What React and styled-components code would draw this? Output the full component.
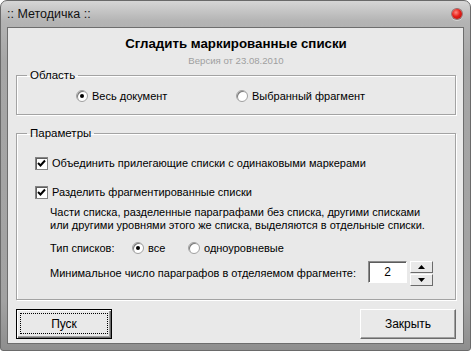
import React from 'react';
import styled, { createGlobalStyle } from 'styled-components';

const GlobalStyle = createGlobalStyle`
  html, body {
    margin: 0;
    padding: 0;
    background: #ffffff;
  }
  body {
    font-family: "Liberation Sans", Arial, sans-serif;
    font-size: 11px;
    color: #000;
  }
`;

const Window = styled.div`
  box-sizing: border-box;
  width: 471px;
  height: 351px;
  border: 1px solid #6a6a6a;
  border-radius: 7px 7px 3px 3px;
  background: linear-gradient(to bottom, #d6d6d6 0px, #b4b4b4 20px, #a6a6a6 60px, #a2a2a2 300px, #8e8e8e 100%);
  display: flex;
  flex-direction: column;
  overflow: hidden;
`;

const TitleBar = styled.div`
  height: 26px;
  display: flex;
  align-items: center;
  justify-content: space-between;
  padding: 0 8px 0 6px;
  font-size: 12.5px;
  color: #111;
`;

const CloseDot = styled.span`
  width: 10px;
  height: 10px;
  border-radius: 50%;
  margin-top: -1px;
  background: radial-gradient(circle at 40% 35%, #ff8a80 0, #e8201a 45%, #a30c08 100%);
  box-shadow: 0 0 0 1px rgba(90, 20, 20, 0.5), 0 1px 0 1px rgba(255, 255, 255, 0.4);
`;

const Client = styled.div`
  flex: 1;
  margin: 0 6px 6px 6px;
  border: 1px solid #6d6d6d;
  background: #e9e9e9;
  padding: 0 7px 0 8px;
  display: flex;
  flex-direction: column;
`;

const Heading = styled.div`
  margin-top: 8px;
  text-align: center;
  font-weight: bold;
  font-size: 13.3px;
  line-height: 16px;
`;

const Version = styled.div`
  margin-top: 3px;
  text-align: center;
  font-size: 9.6px;
  line-height: 12px;
  color: #9f9f9f;
`;

const Group = styled.fieldset`
  margin: ${(p) => p.$top}px 0 0 0;
  padding: 0;
  border: 1px solid #a3a3a3;
  box-shadow: inset 1px 1px 0 #fff, 1px 1px 0 #fff;
  min-width: 0;
`;

const Legend = styled.legend`
  margin-left: 10px;
  padding: 0 3px;
  line-height: 13px;
  font-size: 11.5px;
`;

const GroupBody = styled.div`
  padding: ${(p) => p.$pad};
  display: flex;
  flex-direction: column;
`;

const ScopeRow = styled.div`
  display: grid;
  grid-template-columns: 160px 1fr;
  height: 16px;
  align-items: center;
`;

const Option = styled.label`
  display: flex;
  align-items: center;
  gap: 4px;
  white-space: nowrap;
`;

const Radio = styled.span`
  box-sizing: border-box;
  width: 12px;
  height: 12px;
  border-radius: 50%;
  background: #fff;
  border: 1px solid #a0a0a0;
  box-shadow: inset 1px 1px 0 #7a7a7a;
  display: flex;
  align-items: center;
  justify-content: center;
  flex: none;

  &::after {
    content: '';
    width: 4px;
    height: 4px;
    border-radius: 50%;
    background: ${(p) => (p.$checked ? '#000' : 'transparent')};
  }
`;

const CheckRow = styled.div`
  display: flex;
  align-items: center;
  height: 14px;
  margin-top: ${(p) => p.$top}px;
`;

const Box = styled.span`
  box-sizing: border-box;
  width: 13px;
  height: 13px;
  background: #fff;
  border: 1px solid #848484;
  box-shadow: inset 1px 1px 0 #5f5f5f;
  display: flex;
  align-items: center;
  justify-content: center;
  margin-right: 4px;
  flex: none;
`;

const Sub = styled.div`
  margin-left: 15px;
  display: flex;
  flex-direction: column;
`;

const Note = styled.p`
  margin: 7px 0 0 0;
  line-height: 13px;
`;

const TypeRow = styled.div`
  margin-top: 8px;
  display: grid;
  grid-template-columns: 82px 56px auto;
  align-items: center;
  height: 16px;
`;

const MinRow = styled.div`
  margin-top: 5px;
  display: flex;
  align-items: center;
  justify-content: space-between;
  height: 24px;
`;

const Spin = styled.div`
  display: flex;
  gap: 3px;
  align-items: flex-start;
  align-self: flex-start;
`;

const SpinField = styled.div`
  box-sizing: border-box;
  width: 39px;
  height: 22px;
  background: #fff;
  border: 1px solid;
  border-color: #8c8c8c #fff #fff #8c8c8c;
  box-shadow: inset 1px 1px 0 #5c5c5c;
  display: flex;
  align-items: center;
  justify-content: center;
  font-size: 12px;
`;

const SpinButtons = styled.div`
  display: flex;
  flex-direction: column;
  gap: 1px;
`;

const SpinButton = styled.div`
  box-sizing: border-box;
  width: 23px;
  height: 12px;
  background: #e9e9e9;
  border: 1px solid;
  border-color: #fff #6b6b6b #6b6b6b #fff;
  display: flex;
  align-items: center;
  justify-content: center;
`;

const Footer = styled.div`
  margin-top: 9px;
  display: flex;
  justify-content: space-between;
`;

const Button = styled.button`
  box-sizing: border-box;
  width: 96px;
  height: 30px;
  padding: 0;
  font-family: inherit;
  font-size: 12px;
  color: #000;
  background: #e9e9e9;
  border: 1px solid;
  border-color: ${(p) => (p.$default ? '#000' : '#fff #6b6b6b #6b6b6b #fff')};
  box-shadow: ${(p) =>
    p.$default
      ? 'inset 1px 1px 0 #fff, inset -1px -1px 0 #6b6b6b, inset -2px -2px 0 #a0a0a0'
      : 'inset -1px -1px 0 #a0a0a0'};
  position: relative;

  &::after {
    content: '';
    display: ${(p) => (p.$default ? 'block' : 'none')};
    position: absolute;
    inset: 3px 3px 4px 3px;
    border: 1px dotted #000;
  }
`;

const Tri = ({ up }) => (
  <svg width="7" height="4" viewBox="0 0 7 4">
    <path d={up ? 'M3.5 0 L7 4 L0 4 Z' : 'M0 0 L7 0 L3.5 4 Z'} fill="#000" />
  </svg>
);

const Check = () => (
  <svg width="9" height="9" viewBox="0 0 9 9">
    <path d="M1 4 L3.5 6.5 L8 1.5" stroke="#000" strokeWidth="2" fill="none" />
  </svg>
);

export default function App() {
  return (
    <>
      <GlobalStyle />
      <Window>
        <TitleBar>
          <span>:: Методичка ::</span>
          <CloseDot />
        </TitleBar>
        <Client>
          <Heading>Сгладить маркированные списки</Heading>
          <Version>Версия от 23.08.2010</Version>

          <Group $top={2}>
            <Legend>Область</Legend>
            <GroupBody $pad="6px 0 10px 59px">
              <ScopeRow>
                <Option>
                  <Radio $checked />
                  Весь документ
                </Option>
                <Option>
                  <Radio />
                  Выбранный фрагмент
                </Option>
              </ScopeRow>
            </GroupBody>
          </Group>

          <Group $top={12}>
            <Legend>Параметры</Legend>
            <GroupBody $pad="0 22px 14px 18px">
              <CheckRow $top={16}>
                <Box>
                  <Check />
                </Box>
                Объединить прилегающие списки с одинаковыми маркерами
              </CheckRow>
              <CheckRow $top={15}>
                <Box>
                  <Check />
                </Box>
                Разделить фрагментированные списки
              </CheckRow>
              <Sub>
                <Note>
                  Части списка, разделенные параграфами без списка, другими списками
                  <br />
                  или другими уровнями этого же списка, выделяются в отдельные списки.
                </Note>
                <TypeRow>
                  <span>Тип списков:</span>
                  <Option>
                    <Radio $checked />
                    все
                  </Option>
                  <Option>
                    <Radio />
                    одноуровневые
                  </Option>
                </TypeRow>
                <MinRow>
                  <span>Минимальное число параграфов в отделяемом фрагменте:</span>
                  <Spin>
                    <SpinField>2</SpinField>
                    <SpinButtons>
                      <SpinButton>
                        <Tri up />
                      </SpinButton>
                      <SpinButton>
                        <Tri />
                      </SpinButton>
                    </SpinButtons>
                  </Spin>
                </MinRow>
              </Sub>
            </GroupBody>
          </Group>

          <Footer>
            <Button $default>Пуск</Button>
            <Button>Закрыть</Button>
          </Footer>
        </Client>
      </Window>
    </>
  );
}
